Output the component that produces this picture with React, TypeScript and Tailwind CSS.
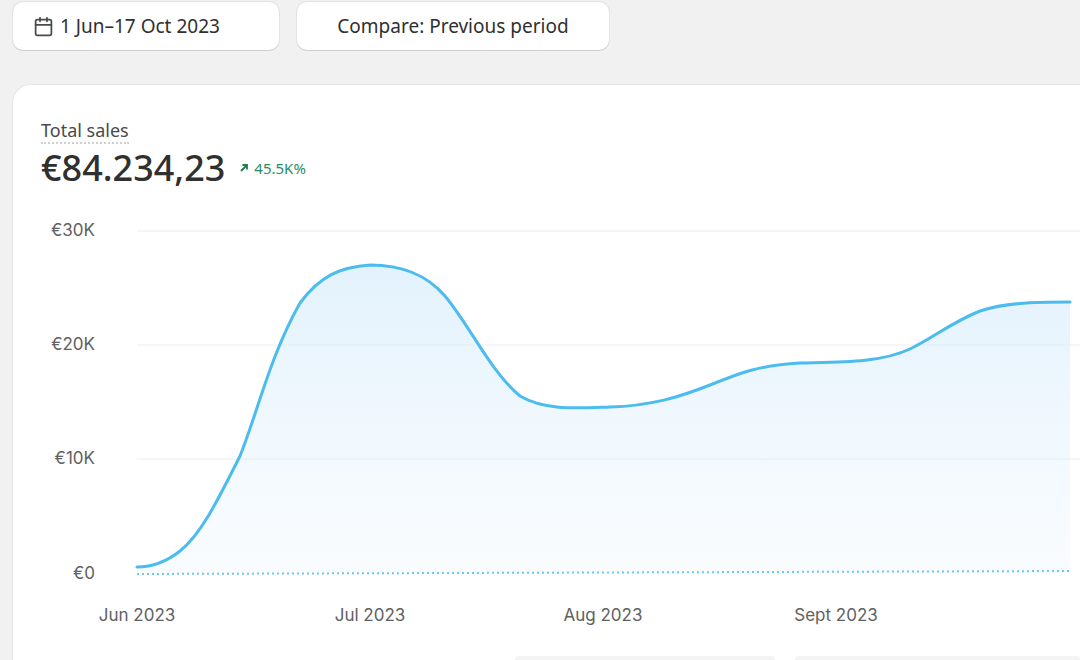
import { Calendar } from "lucide-react";

const curve =
  "M137,566 C150,566 165,562 180,550 C200,534 215,505 240,455 C258,410 270,355 300,302 C320,275 340,266 370,264 C400,264 425,272 445,295 C470,325 490,370 520,395 C545,410 580,407 610,406 C650,405 680,396 710,384 C740,372 760,364 800,362 C840,361 880,362 910,348 C935,336 950,322 980,310 C1005,302 1030,301 1070,301";

export default function App() {
  return (
    <div className="w-[1080px] h-[660px] overflow-hidden bg-[#f1f1f1] font-['Inter',sans-serif]">
      <div className="flex gap-[18px] pl-[13px] pt-[2px]">
        <button className="flex h-[48px] w-[266px] items-center gap-[6px] rounded-[10px] bg-white pl-[20px] text-[19px] text-[#303030] shadow-[0_1px_0_#d0d0d0,0_0_0_1px_#e3e3e3]">
          <Calendar className="h-[21px] w-[21px] text-[#4a4a4a]" strokeWidth={2} />
          1 Jun–17 Oct 2023
        </button>
        <button className="flex h-[48px] w-[312px] items-center justify-center rounded-[10px] bg-white text-[19px] text-[#303030] shadow-[0_1px_0_#d0d0d0,0_0_0_1px_#e3e3e3]">
          Compare: Previous period
        </button>
      </div>
      <div className="ml-[13px] mt-[35px] h-[600px] rounded-tl-[18px] bg-white pl-[28px] pt-[33px] shadow-[0_0_0_1px_#e6e6e6]">
        <div className="inline-block border-b-2 border-dotted border-[#cfcfcf] text-[18px] leading-[24px] text-[#4a4a4a]">
          Total sales
        </div>
        <div className="mt-[2px] flex items-center gap-[14px]">
          <span className="text-[36px] font-medium leading-[44px] text-[#303030]">€84.234,23</span>
          <span className="flex items-center gap-[5px] text-[15px] text-[#2e8a63]">
            <svg width="10" height="10" viewBox="0 0 10 10" fill="none" stroke="#1f7a52" strokeWidth="1.8">
              <path d="M2 8 L8 2 M3.5 2 H8 V6.5" />
            </svg>
            45.5K%
          </span>
        </div>
        <svg className="-ml-[28px] mt-[21px] block shrink-0" width="1067" height="450" viewBox="13 210 1067 450">
          <defs>
            <linearGradient id="fill" x1="0" y1="0" x2="0" y2="1">
              <stop offset="0" stopColor="#cfe9fb" stopOpacity="0.6" />
              <stop offset="1" stopColor="#eaf5fd" stopOpacity="0.3" />
            </linearGradient>
          </defs>
          {[230, 344, 458].map((y) => (
            <line key={y} x1="137" x2="1080" y1={y} y2={y} stroke="#ececec" strokeWidth="1" />
          ))}
          <path d={`${curve} L1070,572 L137,572 Z`} fill="url(#fill)" />
          <path d={curve} fill="none" stroke="#4cbcef" strokeWidth="3" strokeLinecap="round" />
          <line x1="137" y1="573" x2="1070" y2="570" stroke="#6cc8f0" strokeWidth="2" strokeDasharray="2 3" />
          {[
            ["€30K", 235],
            ["€20K", 349],
            ["€10K", 463],
            ["€0", 578],
          ].map(([t, y]) => (
            <text key={t} x="95" y={y as number} textAnchor="end" fontSize="17" fill="#616161" fontFamily="Inter, sans-serif">
              {t}
            </text>
          ))}
          {[
            ["Jun 2023", 137],
            ["Jul 2023", 370],
            ["Aug 2023", 603],
            ["Sept 2023", 836],
          ].map(([t, x]) => (
            <text key={t} x={x as number} y="620" textAnchor="middle" fontSize="17" fill="#616161" fontFamily="Inter, sans-serif">
              {t}
            </text>
          ))}
          <rect x="515" y="655" width="260" height="10" rx="4" fill="#f4f4f4" />
          <rect x="795" y="655" width="285" height="10" rx="4" fill="#f4f4f4" />
        </svg>
      </div>
    </div>
  );
}
